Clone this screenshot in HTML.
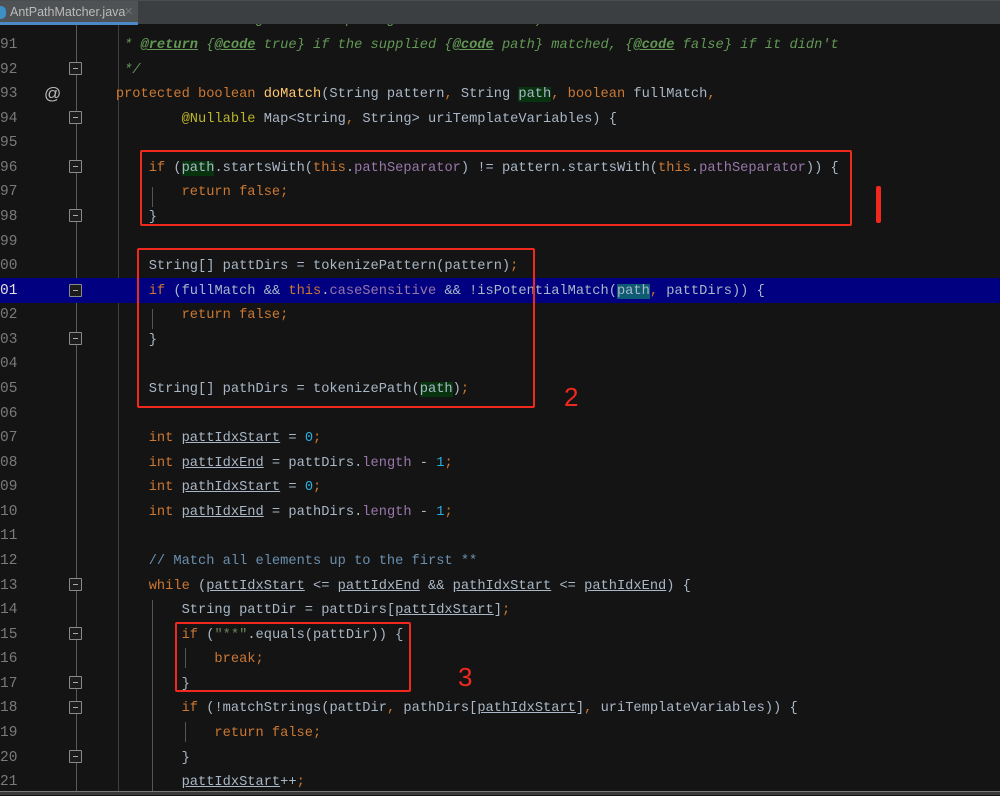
<!DOCTYPE html>
<html><head><meta charset="utf-8"><style>
html,body{margin:0;padding:0;}
body{width:1000px;height:795px;background:#141414;position:relative;overflow:hidden;font-family:"Liberation Mono",monospace;}
.tabbar{position:absolute;left:0;top:0;width:1000px;height:24px;background:#3c3f41;border-top:1px solid #4a4d50;box-sizing:border-box;}
.tab{position:absolute;left:0;top:0;width:138px;height:24px;background:#4e5254;border-bottom:3px solid #4a88c7;box-sizing:border-box;font-family:"Liberation Sans",sans-serif;font-size:12.5px;color:#bbbbbb;line-height:22px;padding-left:10px;}
.tab .ic{position:absolute;left:-5px;top:5px;width:11px;height:13px;border-radius:5px;background:#3d8fc4;}
.tab .x{position:absolute;left:124px;top:0;color:#777;font-size:11px;}
.ln{position:absolute;left:0;font-size:14.5px;color:#7a7a7a;height:24.57px;line-height:24.57px;}
.code{position:absolute;left:83px;font-size:13.7px;color:#a9b7c6;white-space:pre;height:24.57px;line-height:24.57px;margin-top:1px;}
.hl{position:absolute;left:0;width:1000px;height:24.57px;background:#000080;}
.k{color:#cc7832}.f{color:#9876aa}.m{color:#ffc66d}.n{color:#2ab0e0}.a{color:#bbb529}.s{color:#6a8759}
.c{color:#629755;font-style:italic}.cu{color:#629755;font-style:italic;text-decoration:underline;font-weight:bold}
.lc{color:#6a8fae}.u{text-decoration:underline}
.pg{background:#07330f}.pb{background:#0d5c73}
.fold{position:absolute;left:69px;width:13px;height:13px;border:1px solid #8a8a8a;background:#1c1c1c;box-sizing:border-box;border-radius:1px;}
.fold:after{content:"";position:absolute;left:3px;top:5px;width:5px;height:1px;background:#aaa;}
.red{position:absolute;border:2px solid #f0281e;border-radius:2px;}
.guide{position:absolute;width:1px;background:#3a3a3a;}
</style></head><body>
<div style="position:absolute;left:76px;top:24px;width:1px;height:771px;background:#5a5a5a"></div>
<div style="position:absolute;left:118px;top:24px;width:1px;height:771px;background:#3f3f3f"></div>
<div class="hl" style="top:278px"></div>
<div class="guide" style="left:152px;top:309px;height:20px;background:#555"></div>
<div class="guide" style="left:152px;top:187px;height:20px;background:#555"></div>
<div class="guide" style="left:185px;top:648px;height:20px;background:#555"></div>
<div class="guide" style="left:185px;top:722px;height:20px;background:#555"></div>
<div class="guide" style="left:152px;top:600px;height:195px;background:#555"></div>

<div class="ln" style="top:8.4px">90</div><div class="code" style="top:8.4px"><span class="c">     * as far as the given base path goes is sufficient)</span></div>
<div class="ln" style="top:33px">91</div><div class="code" style="top:33px"><span class="c">     * </span><span class="cu">@return</span><span class="c"> {</span><span class="cu">@code</span><span class="c"> true} if the supplied {</span><span class="cu">@code</span><span class="c"> path} matched, {</span><span class="cu">@code</span><span class="c"> false} if it didn't</span></div>
<div class="ln" style="top:57.6px">92</div><div class="code" style="top:57.6px"><span class="c">     */</span></div>
<div class="ln" style="top:82.1px">93</div><div class="code" style="top:82.1px">    <span class="k">protected boolean </span><span class="m">doMatch</span>(String pattern<span class="k">, </span>String <span class="pg">path</span><span class="k">, boolean </span>fullMatch<span class="k">,</span></div>
<div class="ln" style="top:106.7px">94</div><div class="code" style="top:106.7px">            <span class="a">@Nullable</span> Map&lt;String<span class="k">, </span>String&gt; uriTemplateVariables) {</div>
<div class="ln" style="top:131.3px">95</div>
<div class="ln" style="top:155.9px">96</div><div class="code" style="top:155.9px">        <span class="k">if </span>(<span class="pg">path</span>.startsWith(<span class="k">this</span>.<span class="f">pathSeparator</span>) != pattern.startsWith(<span class="k">this</span>.<span class="f">pathSeparator</span>)) {</div>
<div class="ln" style="top:180.4px">97</div><div class="code" style="top:180.4px">            <span class="k">return false;</span></div>
<div class="ln" style="top:205px">98</div><div class="code" style="top:205px">        }</div>
<div class="ln" style="top:229.6px">99</div>
<div class="ln" style="top:254.1px">00</div><div class="code" style="top:254.1px">        String[] pattDirs = tokenizePattern(pattern)<span class="k">;</span></div>
<div class="ln" style="top:278.7px;color:#e0e0e0">01</div><div class="code" style="top:278.7px">        <span class="k">if </span>(fullMatch &amp;&amp; <span class="k">this</span>.<span class="f">caseSensitive</span> &amp;&amp; !isPotentialMatch(<span class="pb">path</span><span class="k">, </span>pattDirs)) {</div>
<div class="ln" style="top:303.3px">02</div><div class="code" style="top:303.3px">            <span class="k">return false;</span></div>
<div class="ln" style="top:327.8px">03</div><div class="code" style="top:327.8px">        }</div>
<div class="ln" style="top:352.4px">04</div>
<div class="ln" style="top:377px">05</div><div class="code" style="top:377px">        String[] pathDirs = tokenizePath(<span class="pg">path</span>)<span class="k">;</span></div>
<div class="ln" style="top:401.5px">06</div>
<div class="ln" style="top:426.1px">07</div><div class="code" style="top:426.1px">        <span class="k">int </span><span class="u">pattIdxStart</span> = <span class="n">0</span><span class="k">;</span></div>
<div class="ln" style="top:450.7px">08</div><div class="code" style="top:450.7px">        <span class="k">int </span><span class="u">pattIdxEnd</span> = pattDirs.<span class="f">length</span> - <span class="n">1</span><span class="k">;</span></div>
<div class="ln" style="top:475.2px">09</div><div class="code" style="top:475.2px">        <span class="k">int </span><span class="u">pathIdxStart</span> = <span class="n">0</span><span class="k">;</span></div>
<div class="ln" style="top:499.8px">10</div><div class="code" style="top:499.8px">        <span class="k">int </span><span class="u">pathIdxEnd</span> = pathDirs.<span class="f">length</span> - <span class="n">1</span><span class="k">;</span></div>
<div class="ln" style="top:524.4px">11</div>
<div class="ln" style="top:548.9px">12</div><div class="code" style="top:548.9px">        <span class="lc">// Match all elements up to the first **</span></div>
<div class="ln" style="top:573.5px">13</div><div class="code" style="top:573.5px">        <span class="k">while </span>(<span class="u">pattIdxStart</span> &lt;= <span class="u">pattIdxEnd</span> &amp;&amp; <span class="u">pathIdxStart</span> &lt;= <span class="u">pathIdxEnd</span>) {</div>
<div class="ln" style="top:598.1px">14</div><div class="code" style="top:598.1px">            String pattDir = pattDirs[<span class="u">pattIdxStart</span>]<span class="k">;</span></div>
<div class="ln" style="top:622.6px">15</div><div class="code" style="top:622.6px">            <span class="k">if </span>(<span class="s">"**"</span>.equals(pattDir)) {</div>
<div class="ln" style="top:647.2px">16</div><div class="code" style="top:647.2px">                <span class="k">break;</span></div>
<div class="ln" style="top:671.8px">17</div><div class="code" style="top:671.8px">            }</div>
<div class="ln" style="top:696.3px">18</div><div class="code" style="top:696.3px">            <span class="k">if </span>(!matchStrings(pattDir<span class="k">, </span>pathDirs[<span class="u">pathIdxStart</span>]<span class="k">, </span>uriTemplateVariables)) {</div>
<div class="ln" style="top:720.9px">19</div><div class="code" style="top:720.9px">                <span class="k">return false;</span></div>
<div class="ln" style="top:745.5px">20</div><div class="code" style="top:745.5px">            }</div>
<div class="ln" style="top:770px">21</div><div class="code" style="top:770px">            <span class="u">pattIdxStart</span>++<span class="k">;</span></div>

<div style="position:absolute;left:44px;top:82px;font-family:'Liberation Sans',sans-serif;font-size:17px;color:#bbb;line-height:24px">@</div>

<div class="fold" style="top:62px"></div>
<div class="fold" style="top:111px"></div>
<div class="fold" style="top:160px"></div>
<div class="fold" style="top:209px"></div>
<div class="fold" style="top:284px"></div>
<div class="fold" style="top:332px"></div>
<div class="fold" style="top:578px"></div>
<div class="fold" style="top:627px"></div>
<div class="fold" style="top:676px"></div>
<div class="fold" style="top:701px"></div>
<div class="fold" style="top:750px"></div>

<div class="red" style="left:140px;top:150px;width:708px;height:72px"></div>
<div class="red" style="left:137px;top:248px;width:394px;height:156px"></div>
<div class="red" style="left:175px;top:622px;width:232px;height:66px"></div>
<div style="position:absolute;left:876px;top:186px;width:5px;height:37px;background:#f0281e;border-radius:2px"></div>
<div style="position:absolute;left:564px;top:382px;font-family:'Liberation Sans',sans-serif;font-size:26px;color:#f0281e">2</div>
<div style="position:absolute;left:458px;top:662px;font-family:'Liberation Sans',sans-serif;font-size:26px;color:#f0281e">3</div>

<div style="position:absolute;left:0;top:791px;width:1000px;height:4px;background:#3a3a3a;border-top:1px solid #777;box-sizing:border-box"></div>

<div class="tabbar"><div class="tab"><span class="ic"></span>AntPathMatcher.java<span class="x">✕</span></div></div>
</body></html>
